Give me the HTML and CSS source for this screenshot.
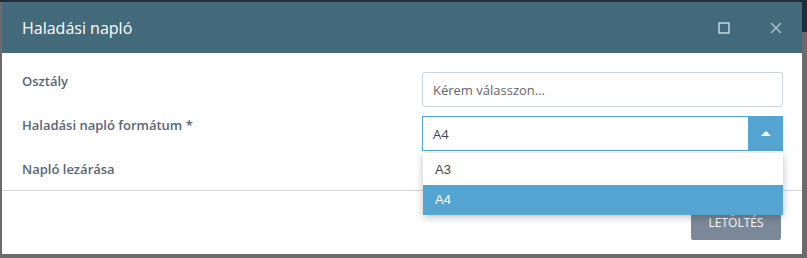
FILE: index.html
```html
<!DOCTYPE html>
<html lang="hu">
<head>
    <meta charset="UTF-8">
    <title>Haladási napló</title>
    <link rel="stylesheet" href="styles.css">
</head>
<body>
    <div class="backdrop">
        <div class="dialog">
            <!-- Header -->
            <div class="dialog-header">
                <span class="dialog-title">Haladási napló</span>
                <div class="dialog-actions">
                    <svg class="icon" width="12" height="12" viewBox="0 0 12 12">
                        <rect x="1" y="1" width="10" height="10" fill="none" stroke="currentColor" stroke-width="2"/>
                    </svg>
                    <svg class="icon" width="12" height="12" viewBox="0 0 12 12">
                        <path d="M1 1 L11 11 M11 1 L1 11" fill="none" stroke="currentColor" stroke-width="1.6"/>
                    </svg>
                </div>
            </div>

            <!-- Form -->
            <div class="dialog-body">
                <div class="form-row">
                    <label>Osztály</label>
                    <div class="field">
                        <div class="input placeholder">Kérem válasszon...</div>
                    </div>
                </div>
                <div class="form-row">
                    <label>Haladási napló formátum *</label>
                    <div class="field">
                        <div class="select open">
                            <span class="select-value">A4</span>
                            <span class="select-btn">
                                <svg width="10" height="5" viewBox="0 0 10 5">
                                    <path d="M0 5 L5 0 L10 5 Z" fill="#fff"/>
                                </svg>
                            </span>
                        </div>
                        <ul class="options">
                            <li>A3</li>
                            <li class="selected">A4</li>
                        </ul>
                    </div>
                </div>
                <div class="form-row short">
                    <label>Napló lezárása</label>
                </div>
            </div>

            <!-- Footer -->
            <div class="dialog-footer">
                <button>Letöltés</button>
            </div>
        </div>
    </div>
</body>
</html>
```

FILE: styles.css
```css
body {
    margin: 0;
    font-family: 'Open Sans', sans-serif;
    background:
        linear-gradient(#1d2f38, #1d2f38) left top / 100% 2px no-repeat,
        linear-gradient(#1d2f38, #1d2f38) right top / 5px 32px no-repeat,
        #6b6b6b;
}

.backdrop {
    padding: 2px 0 0 2px;
}

.dialog {
    width: 800px;
    height: 252px;
    background-color: #fff;
}

.dialog-header {
    height: 51px;
    padding: 0 20px;
    display: flex;
    align-items: center;
    justify-content: space-between;
    background-color: #426a7b;
}

.dialog-title {
    color: #fff;
    font-size: 16px;
    line-height: 22px;
}

.dialog-actions {
    display: flex;
    gap: 40px;
    color: #a4bcc6;
}

.icon {
    display: block;
}

.dialog-body {
    padding: 19px 19px 12px 20px;
    display: flex;
    flex-direction: column;
    gap: 9px;
    border-bottom: 1px solid #d6d6d6;
}

.form-row {
    display: grid;
    grid-template-columns: 400px 1fr;
    height: 35px;
}

.form-row.short {
    height: 18px;
}

.form-row label {
    font-size: 13px;
    font-weight: 600;
    line-height: 18px;
    color: #5a6474;
}

.field {
    position: relative;
}

.input {
    height: 35px;
    box-sizing: border-box;
    border: 1px solid #c8d4e0;
    border-radius: 3px;
    padding: 0 10px;
    display: flex;
    align-items: center;
    font-size: 13px;
}

.placeholder {
    color: #666;
}

.select {
    height: 35px;
    box-sizing: border-box;
    border: 1px solid #55a5d3;
    display: flex;
    align-items: center;
    font-size: 13px;
    color: #444;
}

.select-value {
    flex: 1;
    padding-left: 10px;
}

.select-btn {
    width: 35px;
    height: 35px;
    margin: -1px -1px -1px 0;
    background-color: #55a5d3;
    display: flex;
    align-items: center;
    justify-content: center;
}

.options {
    position: absolute;
    top: 37px;
    left: 1px;
    width: 360px;
    margin: 0;
    padding: 2px 0 0;
    list-style: none;
    background-color: #fff;
    box-shadow: 0 2px 8px rgba(0, 0, 0, 0.25);
    z-index: 10;
    font-family: 'Liberation Sans', sans-serif;
    font-size: 13px;
    color: #444;
}

.options li {
    height: 30px;
    line-height: 30px;
    padding-left: 12px;
}

.options li.selected {
    background-color: #55a5d3;
    color: #fff;
}

.dialog-footer {
    padding: 14px 21px;
    display: flex;
    justify-content: flex-end;
}

button {
    width: 90px;
    height: 35px;
    border: none;
    border-radius: 2px;
    background-color: #7b8899;
    color: #fff;
    font-family: inherit;
    font-size: 12px;
    text-transform: uppercase;
    cursor: pointer;
}
```
